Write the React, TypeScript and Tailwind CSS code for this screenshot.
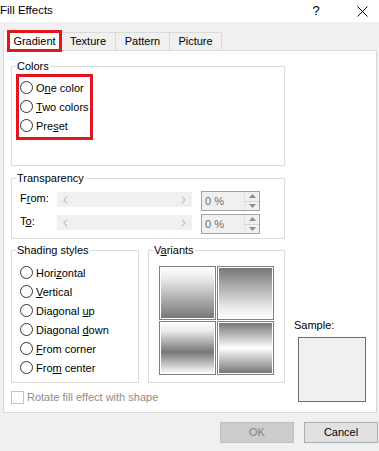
import type { ReactNode } from 'react';

const FONT = "font-['Liberation_Sans',Arial,sans-serif]";

function U({ children }: { children: ReactNode }) {
  return <span className="underline underline-offset-[1px]">{children}</span>;
}

function Radio({ children }: { children: ReactNode }) {
  return (
    <div className="flex h-[19px] items-center gap-[3px]">
      <span className="h-[13px] w-[13px] shrink-0 rounded-full border border-[#333333] bg-white" />
      <span className="leading-[14px]">{children}</span>
    </div>
  );
}

function Group({ title, className, children }: { title: ReactNode; className: string; children: ReactNode }) {
  return (
    <fieldset className={`min-w-0 border border-[#dcdcdc] p-0 ${className}`}>
      <legend className="ml-[4px] px-[1px] leading-[14px]">{title}</legend>
      {children}
    </fieldset>
  );
}

function Slider() {
  return (
    <div className="mt-[1px] flex h-[15px] w-[135px] items-center justify-between bg-[#f0f0f0] px-[6px]">
      <svg width="5" height="8" viewBox="0 0 5 8">
        <path d="M4 0.5 L1 4 L4 7.5" fill="none" stroke="#c9c9c9" strokeWidth="1.4" />
      </svg>
      <svg width="5" height="8" viewBox="0 0 5 8">
        <path d="M1 0.5 L4 4 L1 7.5" fill="none" stroke="#c9c9c9" strokeWidth="1.4" />
      </svg>
    </div>
  );
}

function Spin() {
  return (
    <div className="ml-[9px] flex h-[20px] w-[59px] border border-[#a3a3a3] bg-[#f0f0f0]">
      <div className="flex-1 pl-[3px] leading-[18px] text-[#6d6d6d]">0 %</div>
      <div className="flex w-[15px] flex-col border-l border-[#e0e0e0]">
        <div className="flex flex-1 items-center justify-center border-b border-[#d4d4d4]">
          <svg width="7" height="4" viewBox="0 0 7 4">
            <path d="M0 4 L3.5 0 L7 4 Z" fill="#8c8c8c" />
          </svg>
        </div>
        <div className="flex flex-1 items-center justify-center">
          <svg width="7" height="4" viewBox="0 0 7 4">
            <path d="M0 0 L3.5 4 L7 0 Z" fill="#8c8c8c" />
          </svg>
        </div>
      </div>
    </div>
  );
}

function Tab({ w, children }: { w: string; children: ReactNode }) {
  return (
    <div className={`${w} flex h-[18px] items-center justify-center border border-b-0 border-l-0 border-[#d9d9d9] bg-[#f0f0f0]`}>
      {children}
    </div>
  );
}

const variants = [
  'bg-[linear-gradient(to_bottom,#fcfcfc_0%,#eeeeee_18%,#777777_100%)]',
  'bg-[linear-gradient(to_bottom,#777777_0%,#eeeeee_82%,#fcfcfc_100%)]',
  'bg-[linear-gradient(to_bottom,#fcfcfc_0%,#ececec_15%,#777777_58%,#fafafa_100%)]',
  'bg-[linear-gradient(to_bottom,#777777_0%,#ffffff_50%,#777777_100%)]',
];

export default function App() {
  return (
    <div className={`${FONT} h-[451px] w-[379px] overflow-hidden bg-[#f0f0f0] text-[11px] text-black`}>
      <div className="flex h-[22px] items-center justify-between bg-white">
        <span className="text-[11.5px]">Fill Effects</span>
        <div className="flex items-center pr-[11px]">
          <span className="w-[14px] text-center text-[13px]">?</span>
          <svg className="ml-[34px]" width="11" height="11" viewBox="0 0 11 11">
            <path d="M0.5 0.5 L10.5 10.5 M10.5 0.5 L0.5 10.5" stroke="#000" strokeWidth="1" />
          </svg>
        </div>
      </div>

      <div className="flex items-end pl-[3px] pt-[8px]">
        <div className="relative z-10 -mb-[2px] h-[22px] w-[58px] border-l border-[#d9d9d9] bg-white">
          <div className="ml-[3px] flex h-[22px] w-[55px] items-center justify-center border-[3px] border-[#e3151d]">
            Gradient
          </div>
        </div>
        <Tab w="w-[55px]">Texture</Tab>
        <Tab w="w-[54px]">Pattern</Tab>
        <Tab w="w-[52px]">Picture</Tab>
      </div>

      <div className="ml-[3px] h-[363px] w-[374px] border border-[#d9d9d9] bg-white pl-[7px] pt-[8px]">
        <Group title="Colors" className="h-[107px] w-[274px]">
          <div className="ml-[4px] mt-[1px] w-[77px] border-[3px] border-[#e3151d] pb-[2px] pl-[1px] pt-[1px]">
            <Radio>O<U>n</U>e color</Radio>
            <Radio><U>T</U>wo colors</Radio>
            <Radio>Pre<U>s</U>et</Radio>
          </div>
        </Group>

        <Group title="Transparency" className="mt-[5px] h-[68px] w-[274px]">
          <div className="mt-[6px] flex flex-col gap-[3px] pl-[8px]">
            <div className="flex items-start">
              <span className="w-[37px] leading-[14px]">F<U>r</U>om:</span>
              <Slider />
              <Spin />
            </div>
            <div className="flex items-start">
              <span className="w-[37px] leading-[14px]">T<U>o</U>:</span>
              <Slider />
              <Spin />
            </div>
          </div>
        </Group>

        <div className="mt-[4px] flex">
          <div className="flex w-[274px] flex-col">
            <div className="flex gap-[9px]">
              <Group title="Shading styles" className="h-[140px] w-[128px]">
                <div className="mt-[6px] pl-[8px]">
                  <Radio>Hori<U>z</U>ontal</Radio>
                  <Radio><U>V</U>ertical</Radio>
                  <Radio>Diagonal <U>u</U>p</Radio>
                  <Radio>Diagonal <U>d</U>own</Radio>
                  <Radio><U>F</U>rom corner</Radio>
                  <Radio>Fro<U>m</U> center</Radio>
                </div>
              </Group>
              <Group title={<>V<U>a</U>riants</>} className="h-[140px] w-[137px]">
                <div className="ml-[10px] mt-[9px] grid w-[115px] grid-cols-[57px_57px] grid-rows-[54px_54px] gap-[1px]">
                  {variants.map((v) => (
                    <div key={v} className="border border-[#7f7f7f] bg-white p-[1px]">
                      <div className={`h-full w-full ${v}`} />
                    </div>
                  ))}
                </div>
              </Group>
            </div>
            <div className="mt-[7px] flex items-center gap-[3px]">
              <span className="h-[13px] w-[13px] border border-[#c4c4c4] bg-white" />
              <span className="leading-[14px] text-[#8d8d8d]">Rotate fill effect with shape</span>
            </div>
          </div>
          <div className="ml-[9px] flex flex-col pt-[75px]">
            <span className="leading-[14px]">Sample:</span>
            <div className="ml-[4px] mt-[5px] h-[65px] w-[68px] border border-[#6d6d6d] bg-[#f0f0f0]" />
          </div>
        </div>
      </div>

      <div className="mt-[9px] flex gap-[10px] pl-[220px]">
        <div className="flex h-[21px] w-[74px] items-center justify-center border border-[#bfbfbf] bg-[#cccccc] text-[#838383]">
          OK
        </div>
        <div className="flex h-[21px] w-[74px] items-center justify-center border border-[#adadad] bg-[#e1e1e1]">
          Cancel
        </div>
      </div>
    </div>
  );
}
